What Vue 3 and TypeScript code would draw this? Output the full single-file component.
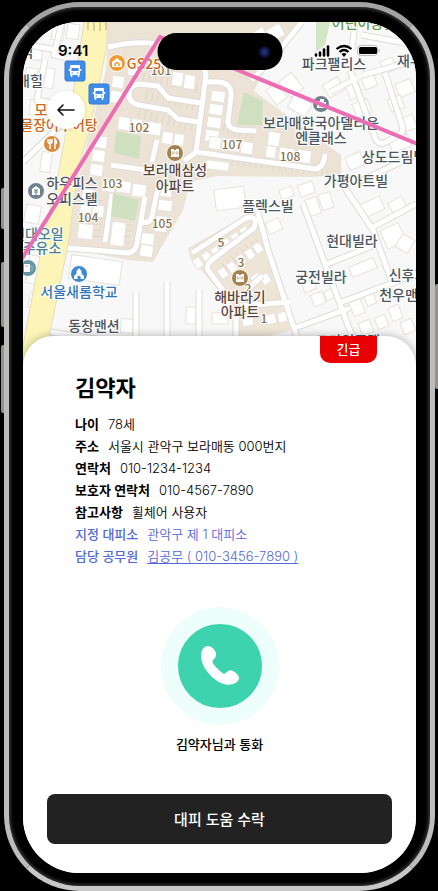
<script setup lang="ts">
interface Detail {
  label: string
  value: string
  blue?: boolean
  tel?: string
}

interface MapLabel {
  text: string
  x: number
  y: number
  kind: 'place' | 'apt' | 'food' | 'school' | 'number' | 'park' | 'gas'
}

const details: Detail[] = [
  { label: '나이', value: '78세' },
  { label: '주소', value: '서울시 관악구 보라매동 000번지' },
  { label: '연락처', value: '010-1234-1234' },
  { label: '보호자 연락처', value: '010-4567-7890' },
  { label: '참고사항', value: '휠체어 사용자' },
  { label: '지정 대피소', value: '관악구 제 1 대피소', blue: true },
  { label: '담당 공무원', value: '김공무 ( 010-3456-7890 )', blue: true, tel: 'tel:01034567890' },
]

const labels: MapLabel[] = [
  { text: '101', x: 161, y: 75, kind: 'number' },
  { text: '102', x: 139, y: 132, kind: 'number' },
  { text: '103', x: 112, y: 188, kind: 'number' },
  { text: '104', x: 88, y: 222, kind: 'number' },
  { text: '105', x: 162, y: 228, kind: 'number' },
  { text: '107', x: 232, y: 149, kind: 'number' },
  { text: '108', x: 290, y: 161, kind: 'number' },
  { text: '5', x: 221, y: 247, kind: 'number' },
  { text: '3', x: 241, y: 267, kind: 'number' },
  { text: '2', x: 248, y: 293, kind: 'number' },
  { text: '1', x: 264, y: 323, kind: 'number' },
  { text: '매힐', x: 30, y: 86, kind: 'place' },
  { text: '역', x: 27, y: 57, kind: 'place' },
  { text: '모', x: 41, y: 115, kind: 'food' },
  { text: '물장어구어탕', x: 59, y: 130, kind: 'food' },
  { text: 'GS25', x: 144, y: 69, kind: 'food' },
  { text: '하우피스', x: 72, y: 188, kind: 'place' },
  { text: '오피스텔', x: 72, y: 204, kind: 'place' },
  { text: '현대오일', x: 38, y: 239, kind: 'gas' },
  { text: '주유소', x: 42, y: 253, kind: 'gas' },
  { text: '서울새롬학교', x: 79, y: 297, kind: 'school' },
  { text: '동창맨션', x: 94, y: 331, kind: 'place' },
  { text: '보라매삼성', x: 175, y: 175, kind: 'apt' },
  { text: '아파트', x: 175, y: 191, kind: 'apt' },
  { text: '해바라기', x: 240, y: 302, kind: 'apt' },
  { text: '아파트', x: 240, y: 317, kind: 'apt' },
  { text: '어린이공원', x: 364, y: 28, kind: 'park' },
  { text: '파크팰리스', x: 334, y: 69, kind: 'place' },
  { text: '재우', x: 410, y: 66, kind: 'place' },
  { text: '보라매한국아델리움', x: 321, y: 128, kind: 'place' },
  { text: '엔클래스', x: 321, y: 143, kind: 'place' },
  { text: '상도드림빌', x: 394, y: 162, kind: 'place' },
  { text: '가평아트빌', x: 356, y: 186, kind: 'place' },
  { text: '플렉스빌', x: 268, y: 211, kind: 'place' },
  { text: '현대빌라', x: 352, y: 246, kind: 'place' },
  { text: '궁전빌라', x: 321, y: 282, kind: 'place' },
  { text: '신후지', x: 408, y: 280, kind: 'place' },
  { text: '천우맨션', x: 405, y: 300, kind: 'place' },
  { text: '프라임주택', x: 348, y: 346, kind: 'place' },
]

/* x, y, width, height, rotation in degrees */
const buildings: number[][] = [
  [67, 24, 12, 15, 8], [52, 26, 12, 14, 8], [30, 45, 12, 15, 4], [26, 68, 11, 12, 6],
  [42, 68, 12, 20, 8], [30, 100, 16, 15, 5], [41, 152, 10, 20, 8], [25, 205, 15, 18, 10],
  [28, 256, 16, 28, 10], [29, 293, 9, 15, 12],
  [112, 76, 12, 12, 8], [110, 91, 12, 12, 8], [128, 64, 13, 12, 8], [172, 72, 11, 14, 8], [184, 75, 11, 14, 8],
  [118, 117, 12, 13, 8], [131, 119, 11, 13, 8], [144, 122, 17, 13, 8], [162, 132, 11, 12, 8], [174, 134, 10, 12, 8],
  [94, 136, 13, 12, 8], [92, 150, 13, 12, 8], [90, 164, 13, 12, 8], [102, 181, 13, 11, 8], [117, 181, 14, 12, 8], [132, 184, 14, 13, 8],
  [82, 189, 12, 12, 8], [80, 203, 12, 12, 8], [92, 205, 12, 12, 6], [78, 224, 15, 15, 6], [111, 222, 14, 24, 6],
  [160, 185, 12, 12, 6], [158, 200, 14, 11, 6], [155, 216, 12, 16, 6], [141, 233, 13, 12, 8], [140, 245, 13, 12, 8],
  [211, 91, 14, 11, 8], [209, 104, 14, 11, 8], [207, 117, 14, 11, 8], [205, 130, 14, 12, 8],
  [209, 137, 12, 12, 8], [222, 139, 18, 12, 8], [241, 142, 12, 12, 8], [268, 132, 12, 14, 8], [266, 146, 10, 12, 8],
  [279, 148, 15, 12, 8], [297, 150, 14, 13, 8], [206, 161, 23, 9, 7],
  [70, 258, 51, 24, 8], [215, 188, 30, 21, -7],
  [194, 258, 8, 10, -35], [203, 252, 8, 10, -35], [212, 247, 8, 10, -35], [223, 239, 8, 10, -35], [232, 233, 8, 10, -35], [241, 227, 8, 10, -35],
  [219, 268, 8, 10, -35], [228, 262, 8, 10, -35], [237, 255, 8, 10, -35], [246, 249, 8, 10, -35], [254, 243, 8, 10, -35],
  [252, 274, 9, 10, -35], [261, 274, 9, 10, -35], [242, 315, 11, 11, -10], [266, 314, 10, 10, -10], [278, 312, 9, 10, -10],
  [283, 75, 16, 20, -38], [270, 85, 13, 18, -38], [290, 98, 20, 15, 30], [325, 80, 17, 15, -30], [317, 49, 11, 16, -20],
  [268, 26, 15, 13, -30], [251, 30, 16, 14, -30],
  [347, 80, 13, 18, -22], [363, 76, 13, 12, -22], [354, 101, 16, 14, -22], [382, 59, 13, 13, -22], [397, 81, 16, 14, -22],
  [389, 97, 14, 13, -22], [403, 116, 12, 14, -22], [347, 154, 16, 14, -22], [390, 137, 20, 13, -22],
  [299, 183, 15, 12, -18], [307, 198, 12, 17, -18], [320, 193, 12, 16, -18],
  [267, 220, 14, 12, -25], [280, 188, 13, 10, -22], [361, 200, 22, 14, -24], [390, 199, 15, 13, -30], [383, 226, 20, 20, -24],
  [350, 262, 26, 11, -22], [398, 236, 14, 15, 30],
  [303, 281, 12, 10, -22], [312, 293, 12, 12, -22], [325, 290, 10, 9, -22], [351, 300, 12, 15, -22], [365, 293, 10, 12, -22],
  [360, 321, 12, 13, -22], [376, 316, 11, 12, -22], [390, 306, 11, 14, -22],
  [186, 307, 10, 17, 3], [121, 319, 12, 14, 3], [212, 313, 16, 11, 2], [402, 320, 12, 13, -22],
]
</script>

<template>
  <div class="stage">
    <span class="side-key action"></span>
    <span class="side-key volume-up"></span>
    <span class="side-key volume-down"></span>
    <span class="side-key power"></span>
    <div class="phone">
      <main class="screen">
        <header class="map-area">
          <svg class="map" viewBox="23 22 393 344" preserveAspectRatio="xMidYMin slice" aria-label="지도">
            <rect x="23" y="22" width="393" height="344" fill="#f8f8f8" />
            <path d="M108 22H302L270 60 254 91 341 155 341 174 314 177 218 176 190 182 183 210 153 262 128 260 67 248 76 190 90 130 106 70Z" fill="#ece3d6" />
            <path d="M188 248 254 211 277 265 285 312 295 329 236 345 236 310 205 275 190 258Z" fill="#efe5d7" />
            <path d="M316 22h14l-5 23-9 6Z" fill="#d2e5c5" />

            <g class="parking">
              <path d="M143 78 200 89M146 95 200 107M139 113 196 128M99 200 96 240M128 224l-3 20M218 124l38 14M232 160l96 12M224 267l34-26" />
            </g>
            <g fill="#fff" stroke="#e6e2dc">
              <rect
                v-for="([x, y, w, h, r], i) in buildings"
                :key="i"
                :x="x"
                :y="y"
                :width="w"
                :height="h"
                :transform="`rotate(${r} ${x + w / 2} ${y + h / 2})`"
              />
            </g>

            <g v-for="layer in ['street-edge', 'street']" :key="layer" :class="layer">
              <path d="M62 22 54 55 67 58M23 44 57 50M45 60 37 100 62 105M23 162 66 120" />
              <path d="M108 47C145 38 175 42 215 66M302 22 276 54 252 80M200 50 206 75 196 152M206 82h14q12 2 11 14l-3 25q0 8 10 9l18 1M196 152l120 17q8-2 9-15M196 152l-12 9" />
              <path d="M201 103 168 98 158 86 139 84q-10 1-10 10t10 11l29 5 10 9 21 3M111 165l43 6M157 140l-5 22M67 248l62 5q7-2 8-10l8-46M141 222q10 2 11-6l6-28M105 242l7-48" />
              <path d="M355 22 352 50M363 75 416 60M330 92l27-14M362 35l54 10M350 70l26 70q5 6 12 1l9-5q8-3 5-11l-17-52" />
              <path d="M256 205 268 250 298 340M192 253 246 218q13-3 8 10l-41 31q-10 8-2 15l13 18M250 287 262 276M303 204l22 60 32 85M343 185l30 45 20 55M327 264l45-18M371 228l45-24M342 302l74-28M295 328 350 308M358 182l60-28" />
              <path d="M136 293v60M167 282v60M199 290v60M50 332l180 28M290 302 240 306M236 310v40" />
            </g>

            <path d="M116 131 141 136 139 159 114 153Z" fill="#cfe0c0" />
            <path d="M113 193 139 200 135 221 111 216Z" fill="#cfe0c0" />
            <path d="M244 92 263 101 262 125 237 125Z" fill="#cfe0c0" />

            <path d="M84 22H108L106 50 98 90 88 135 79 165 68 245 50 332 45 366H20L24 340 43 240 58 175 72 100Z" fill="#fcf5b7" stroke="#e3dcc0" />
            <path d="M88 22v8M94 22v9M100 22v9M106 22v8" stroke="#d9cf9b" stroke-width="2" />

            <g class="map-text">
              <text v-for="(l, i) in labels" :key="i" :x="l.x" :y="l.y" :class="l.kind">{{ l.text }}</text>
            </g>

            <g v-for="([x, y], i) in [[65, 61], [89, 84]]" :key="'bus' + i" :transform="`translate(${x} ${y})`">
              <rect width="20" height="20" rx="2" fill="#3f8de9" stroke="#3279cf" />
              <path d="M6 4h8q1 0 1 1v9H5V5q0-1 1-1Z" fill="#fff" />
              <path d="M4.500 8v2M15.500 8v2M6.500 14v2M13.500 14v2" stroke="#fff" stroke-width="1.500" />
              <path d="M6.500 7h7v3h-7Z" fill="#3f8de9" />
              <path d="M6.500 12h1.500M12 12h1.500" stroke="#3f8de9" />
            </g>
            <g stroke="#fff">
              <circle cx="117" cy="63" r="8.500" fill="#f09a33" />
              <circle cx="52" cy="144" r="8.500" fill="#d98a3f" />
              <circle cx="175" cy="153" r="8.500" fill="#a5814f" />
              <circle cx="240" cy="278" r="8.500" fill="#a5814f" />
              <circle cx="36" cy="191" r="8.500" fill="#71828c" />
              <circle cx="321" cy="104" r="8.500" fill="#71828c" />
              <circle cx="28" cy="268" r="8.500" fill="#6795a3" />
              <circle cx="79" cy="274" r="8.500" fill="#3f88cf" />
            </g>
            <g fill="#fff">
              <path d="M112 62 117 58 122 62V67H112Z" />
              <path d="M171 149h3v1h2v-1h3v8h-8ZM236 274h3v1h2v-1h3v8h-8Z" />
              <path d="M32 189 36 186 40 189V195H32ZM317 101h3v-2h4v3h2v6h-9Z" />
              <path d="M24 264h6v8h-6Z" />
              <path d="M79 268 81.500 271V273.500L84 276V279H80.500V276H77.500V279H74V276L76.500 273.500V271Z" />
            </g>
            <g fill="none">
              <path d="M115 66v-2q2-3 4 0v2" stroke="#f09a33" stroke-width="1.500" />
              <path d="M48 139v3q2 3 4 0v-3M50 139v10M55 149v-10q2 2 1 5" stroke="#fff" stroke-width="1.500" />
              <path d="M173 151v4M177 151v4M171 153h8M238 276v4M242 276v4M236 278h8" stroke="#d2bc9b" />
              <path d="M34 190h4M34 192h4M36 189v6M319 104h5M319 106h5" stroke="#71828c" />
              <path d="M30 266h2v5M25 266h3" stroke="#9bc0ca" />
            </g>

            <path d="M18 265 160 37 240 71 420 145" fill="none" stroke="#ed6db5" stroke-width="4" stroke-linejoin="round" />
          </svg>

          <div class="status-bar">
            <span class="time">9:41</span>
            <svg class="indicators" viewBox="0 0 66 14" aria-hidden="true">
              <path d="M2 10.500v1M6 8.500v3M10 5.500v6M14 2.500v9" stroke="#000" stroke-width="2.600" stroke-linecap="round" />
              <path d="M22.500 5q7.500-6 15 0M25.500 8q4.500-4 9 0" fill="none" stroke="#000" stroke-width="2.200" />
              <path d="M27.500 10q2.500-2 5 0L30 13Z" />
              <rect x="43.500" y="1.500" width="20" height="10" rx="3" fill="#fff" fill-opacity=".6" stroke="#b9b9b9" />
              <rect x="45" y="3" width="18" height="7" rx="1.500" />
              <path d="M65 5v3" stroke="#aaa" />
            </svg>
          </div>
          <div class="island"><span class="lens"></span></div>

          <button class="back" type="button" aria-label="뒤로">
            <svg viewBox="0 0 20 14" aria-hidden="true">
              <path d="M18 7H2M7 2 2 7l5 5" fill="none" stroke="#111" stroke-width="1.600" stroke-linecap="round" stroke-linejoin="round" />
            </svg>
          </button>
        </header>

        <section class="sheet">
          <span class="badge">긴급</span>
          <h1>김약자</h1>
          <dl class="details">
            <div v-for="d in details" :key="d.label" class="row" :class="{ blue: d.blue }">
              <dt>{{ d.label }}</dt>
              <dd>
                <a v-if="d.tel" :href="d.tel">{{ d.value }}</a>
                <template v-else>{{ d.value }}</template>
              </dd>
            </div>
          </dl>

          <div class="call">
            <button id="call-button" class="call-button" type="button" aria-labelledby="call-label">
              <svg viewBox="0 0 84 84" aria-hidden="true">
                <path d="M30 22C25 22 23 27 23 33C24 46 38 59 48 60.500C55 61.500 61 58 61 54C61 51 58 49 55 47C52 45 50 47 47 49.500C45 50.500 43 48 40 45C37 42 34 39 34.500 37C36 35 39 32 38 29C37 26 34 22 30 22Z" fill="#fff" />
              </svg>
            </button>
            <label id="call-label" for="call-button">김약자님과 통화</label>
          </div>

          <button class="accept" type="button">대피 도움 수락</button>
        </section>
      </main>
    </div>
  </div>
</template>

<style>
body {
  background: #000;
}
</style>

<style scoped>
.stage {
  position: relative;
  box-sizing: border-box;
  min-height: 100vh;
  padding: 2px 3px 0 4px;
  overflow: hidden;
  background: #000;
  color: #000;
  font-family: Inter, "Noto Sans CJK KR", sans-serif;
}

.phone {
  box-sizing: border-box;
  padding: 15px 14px 13px;
  border: 5px solid;
  border-color: #a3a3a3 #bcbcbc #c8c8c8;
  border-radius: 76px;
  background: #000;
  box-shadow: inset 0 0 3px 2px #303030;
}

.side-key {
  position: absolute;
  left: 1px;
  width: 3px;
  border-radius: 2px 0 0 2px;
  background: #98928f;
}

.action {
  top: 188px;
  height: 41px;
}

.volume-up {
  top: 262px;
  height: 65px;
}

.volume-down {
  top: 345px;
  height: 68px;
}

.power {
  top: 284px;
  right: 0;
  left: auto;
  height: 105px;
}

.screen {
  overflow: hidden;
  border-radius: 56px;
  background: #fff;
}

.map-area {
  position: relative;
  height: 344px;
}

.map {
  display: block;
  width: 100%;
  height: 100%;
}

.street-edge,
.street,
.parking {
  fill: none;
  stroke-linejoin: round;
}

.street-edge {
  stroke: #dddcd9;
  stroke-width: 7px;
}

.street {
  stroke: #fff;
  stroke-width: 5px;
}

.parking {
  stroke: #dfd5c6;
  stroke-width: 9px;
  stroke-dasharray: 1 5;
}

.map-text {
  fill: #4a5560;
  stroke: #fff;
  stroke-width: 2px;
  paint-order: stroke;
  font-family: "Noto Sans CJK KR", sans-serif;
  font-size: 14px;
  font-weight: 500;
  text-anchor: middle;
}

.apt {
  fill: #5b4640;
}

.food {
  fill: #c9691d;
}

.school {
  fill: #2f74b8;
}

.gas {
  fill: #4b7d92;
}

.park {
  fill: #5e9a45;
}

.number {
  fill: #84704e;
  font-size: 12px;
}

.status-bar {
  position: absolute;
  top: 20px;
  right: 36px;
  left: 35px;
  display: flex;
  align-items: center;
  justify-content: space-between;
  height: 18px;
}

.time {
  font-size: 15px;
  font-weight: 600;
  line-height: 18px;
}

.indicators {
  width: 66px;
  height: 14px;
}

.island {
  position: absolute;
  top: 11px;
  left: 50%;
  display: flex;
  align-items: center;
  justify-content: flex-end;
  box-sizing: border-box;
  width: 125px;
  height: 37px;
  padding-right: 12px;
  border-radius: 19px;
  background: #000;
  transform: translateX(-50%);
}

.lens {
  width: 12px;
  height: 12px;
  border-radius: 50%;
  background: radial-gradient(circle, #23306f 0 18%, #10174a 45%, #080a1e 75%);
}

.back {
  position: absolute;
  top: 69px;
  left: 24px;
  display: grid;
  place-items: center;
  width: 38px;
  height: 38px;
  padding: 0;
  border: 0;
  border-radius: 50%;
  background: #fff;
  box-shadow: 0 1px 4px rgb(0 0 0 / 12%);
}

.back svg {
  width: 20px;
  height: 14px;
}

.sheet {
  position: relative;
  margin-top: -30px;
  padding: 36px 24px 29px;
  border-radius: 30px;
  background: #fff;
  box-shadow: 0 0 8px rgb(0 0 0 / 30%);
}

.badge {
  position: absolute;
  top: 0;
  right: 39px;
  width: 57px;
  border-radius: 0 0 10px 10px;
  background: #e90000;
  color: #fff;
  font-size: 13px;
  font-weight: 500;
  line-height: 27px;
  text-align: center;
}

h1 {
  margin: 0 28px;
  font-size: 22px;
  font-weight: 600;
  line-height: 32px;
}

.details {
  margin: 9px 28px 0;
  font-size: 13px;
  line-height: 22px;
}

.row {
  display: flex;
  gap: 9px;
  height: 22px;
}

dt {
  font-weight: 600;
}

dd {
  margin: 0;
  font-weight: 350;
}

.blue,
.blue a {
  color: #5268d6;
}

.blue dt {
  font-weight: 500;
}

.blue a {
  text-underline-offset: 2px;
}

.call {
  display: flex;
  flex-direction: column;
  align-items: center;
  gap: 9px;
  margin-top: 40px;
  font-size: 13px;
  font-weight: 500;
  line-height: 20px;
}

.call-button {
  box-sizing: border-box;
  width: 118px;
  height: 118px;
  padding: 0;
  border: 17px solid #eefffb;
  border-radius: 50%;
  background: #3dd3ae;
}

.call-button svg {
  display: block;
  width: 100%;
  height: 100%;
}

.accept {
  display: block;
  width: 100%;
  height: 50px;
  margin-top: 40px;
  padding: 0 0 2px;
  border: 0;
  border-radius: 8px;
  background: #222;
  color: #fff;
  font: inherit;
  font-size: 15px;
  font-weight: 500;
}
</style>
